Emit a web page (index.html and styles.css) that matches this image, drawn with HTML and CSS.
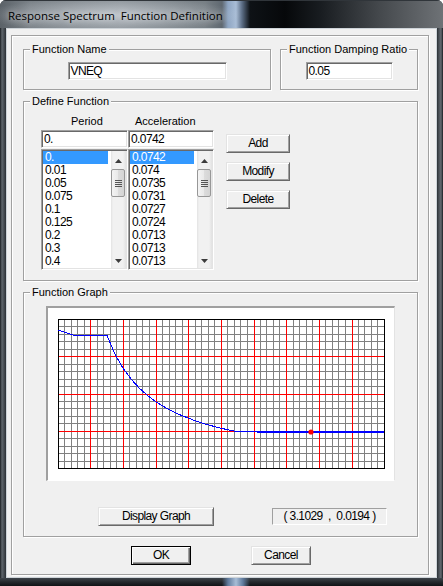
FILE: index.html
```
<!DOCTYPE html>
<html>
<head>
<meta charset="utf-8">
<link rel="stylesheet" href="styles.css">
</head>
<body>
<div class="window">
  <div class="titlebar"><span class="title">Response Spectrum  Function Definition</span></div>
  <div class="client">
    <div class="frame">
      <div class="row1">
        <fieldset class="grp grp-name">
          <legend>Function Name</legend>
          <div class="grp-body"><div class="edit edit-name">VNEQ</div></div>
        </fieldset>
        <fieldset class="grp grp-damp">
          <legend>Function Damping Ratio</legend>
          <div class="grp-body"><div class="edit edit-damp">0.05</div></div>
        </fieldset>
      </div>

      <fieldset class="grp grp-define">
        <legend>Define Function</legend>
        <div class="define-body">
          <div class="col col-period">
            <div class="colhead">Period</div>
            <div class="edit edit-col">0.</div>
            <div class="list">
              <div class="items">
                <div class="item sel">0.</div>
                <div class="item">0.01</div>
                <div class="item">0.05</div>
                <div class="item">0.075</div>
                <div class="item">0.1</div>
                <div class="item">0.125</div>
                <div class="item">0.2</div>
                <div class="item">0.3</div>
                <div class="item">0.4</div>
              </div>
              <div class="sbar">
                <div class="arrow arrow-up"><svg width="7" height="4" viewBox="0 0 7 4"><path d="M0 4H7L3.5 0Z"/></svg></div>
                <div class="thumb"><div class="grip"></div></div>
                <div class="track"></div>
                <div class="arrow arrow-down"><svg width="7" height="4" viewBox="0 0 7 4"><path d="M0 0H7L3.5 4Z"/></svg></div>
              </div>
            </div>
          </div>
          <div class="col col-accel">
            <div class="colhead">Acceleration</div>
            <div class="edit edit-col">0.0742</div>
            <div class="list">
              <div class="items">
                <div class="item sel">0.0742</div>
                <div class="item">0.074</div>
                <div class="item">0.0735</div>
                <div class="item">0.0731</div>
                <div class="item">0.0727</div>
                <div class="item">0.0724</div>
                <div class="item">0.0713</div>
                <div class="item">0.0713</div>
                <div class="item">0.0713</div>
              </div>
              <div class="sbar">
                <div class="arrow arrow-up"><svg width="7" height="4" viewBox="0 0 7 4"><path d="M0 4H7L3.5 0Z"/></svg></div>
                <div class="thumb"><div class="grip"></div></div>
                <div class="track"></div>
                <div class="arrow arrow-down"><svg width="7" height="4" viewBox="0 0 7 4"><path d="M0 0H7L3.5 4Z"/></svg></div>
              </div>
            </div>
          </div>
          <div class="btns">
            <div class="btn btn-side">Add</div>
            <div class="btn btn-side">Modify</div>
            <div class="btn btn-side">Delete</div>
          </div>
        </div>
      </fieldset>

      <fieldset class="grp grp-graph">
        <legend>Function Graph</legend>
        <div class="graph-body">
          <div class="canvas">
            <svg width="346" height="172" viewBox="49 308 346 172">
              <g shape-rendering="crispEdges" fill="none">
                <path stroke="#808080" stroke-width="1" d="M65.5 319V469M72.5 319V469M78.5 319V469M85.5 319V469M98.5 319V469M104.5 319V469M111.5 319V469M117.5 319V469M130.5 319V469M137.5 319V469M143.5 319V469M150.5 319V469M163.5 319V469M170.5 319V469M176.5 319V469M183.5 319V469M196.5 319V469M202.5 319V469M209.5 319V469M215.5 319V469M228.5 319V469M235.5 319V469M241.5 319V469M248.5 319V469M261.5 319V469M267.5 319V469M274.5 319V469M280.5 319V469M294.5 319V469M300.5 319V469M307.5 319V469M313.5 319V469M326.5 319V469M333.5 319V469M339.5 319V469M346.5 319V469M359.5 319V469M365.5 319V469M372.5 319V469M378.5 319V469M59 326.5H386M59 334.5H386M59 341.5H386M59 349.5H386M59 364.5H386M59 371.5H386M59 379.5H386M59 386.5H386M59 401.5H386M59 408.5H386M59 416.5H386M59 423.5H386M59 438.5H386M59 446.5H386M59 453.5H386M59 461.5H386"/>
                <path stroke="#ff0000" stroke-width="1" d="M91.5 319V469M124.5 319V469M157.5 319V469M189.5 319V469M222.5 319V469M255.5 319V469M287.5 319V469M320.5 319V469M353.5 319V469M59 356.5H386M59 394.5H386M59 431.5H386"/>
                <rect x="59.5" y="319.5" width="326" height="149" stroke="#000" stroke-width="1"/>
                <polyline stroke="#0000ff" stroke-width="1" points="59.5,330.5 61,330.8 63,331.4 65,332 67.2,332.7 69.2,333.4 75.3,335.3 107.9,335.3 116,354.3 124.2,368.5 132.4,379.5 140.5,388.4 148.7,395.6 156.8,401.7 165,406.8 173.1,411.1 181.3,414.9 189.4,418.2 197.6,421.2 205.7,423.8 213.9,426.1 222,428.2 230.2,430.1 238.3,431.5 258,431.8"/>
                <path stroke="#0000ff" stroke-width="2" d="M258 432H385"/>
              </g>
              <circle cx="312" cy="432" r="2.6" fill="#ff0000"/>
            </svg>
          </div>
          <div class="graph-row">
            <div class="btn btn-display">Display Graph</div>
            <div class="coords">( 3.1029  ,  0.0194 )</div>
          </div>
        </div>
      </fieldset>

      <div class="dlg-btns">
        <div class="btn btn-dlg btn-default">OK</div>
        <div class="btn btn-dlg">Cancel</div>
      </div>
    </div>
  </div>
  <div class="bottomframe"></div>
</div>
</body>
</html>
```
FILE: styles.css
```
html, body {
  margin: 0;
  padding: 0;
  background: #ffffff;
}

.window {
  width: 443px;
  height: 586px;
  border-radius: 6px 6px 0 0;
  overflow: hidden;
  background: linear-gradient(90deg, #181c20 0, #5f666c 2px, #464c52 4px, #2a2f34 6px, #2a2f34 437px, #4a5056 439px, #646a70 441px, #181c20 443px);
}

.titlebar {
  height: 28px;
  box-sizing: border-box;
  padding: 6px 0 0 8px;
  box-shadow: inset 0 1px 0 #30353a;
  background:
    radial-gradient(ellipse 130px 17px at 112px 15px, rgba(225, 230, 236, 0.6), rgba(225, 230, 236, 0) 100%),
    linear-gradient(90deg, #5b6268 0, #7b8288 30px, #8b9298 120px, #788086 205px, #5f6870 222px, #8fa6c3 228px, #a9bdd6 236px, #5c6e86 242px, #0e1216 250px, #06080a 285px, #181c20 320px, #45494d 380px, #6e7276 443px);
}

.title {
  font-family: "Open Sans", "Noto Sans", sans-serif;
  font-size: 11.5px;
  line-height: 16px;
  color: #000;
  white-space: pre;
  text-shadow: 0 0 6px rgba(255, 255, 255, 0.7);
}

.client {
  margin: 0 6px;
  height: 550px;
  box-sizing: border-box;
  border: 1px solid #cdd3d8;
  background: #f0f0f0;
  padding-top: 6px;
  padding-left: 4px;
}

.frame {
  width: 418px;
  height: 540px;
  box-sizing: border-box;
  border: 1px solid #a0a0a0;
  box-shadow: inset 1px 1px 0 #fff, 1px 1px 0 #fff;
  padding: 7px 10px 0 11px;
  font-family: "Liberation Sans", Arial, sans-serif;
  font-size: 11px;
  color: #000;
}

.row1 {
  display: flex;
  gap: 9px;
}

.grp {
  margin: 0;
  padding: 0;
  min-width: 0;
  border: 1px solid #a0a0a0;
  box-shadow: inset 1px 1px 0 #fff, 1px 1px 0 #fff;
}

.grp legend {
  margin-left: 6px;
  padding: 0 2px;
  font-size: 11px;
  line-height: 13px;
  background: #f0f0f0;
}

.grp-name {
  width: 248px;
  box-sizing: border-box;
}

.grp-damp {
  flex: 1;
}

.grp-body {
  display: flex;
  justify-content: center;
  padding: 6px 0 9px;
}

.ctl-text,
.edit,
.items,
.btn,
.coords {
  font-family: "Liberation Sans", Arial, sans-serif;
  font-size: 12px;
  letter-spacing: -0.6px;
}

.edit {
  box-sizing: border-box;
  height: 18px;
  background: #fff;
  border: 1px solid;
  border-color: #a0a0a0 #fff #fff #a0a0a0;
  box-shadow: inset 1px 1px 0 #696969, inset -1px -1px 0 #e3e3e3;
  padding: 0 2px;
  line-height: 16px;
  white-space: nowrap;
  overflow: hidden;
}

.edit-name {
  width: 159px;
}

.edit-damp {
  width: 87px;
}

.grp-define {
  margin-top: 5px;
}

.define-body {
  display: flex;
  align-items: flex-start;
  padding: 7px 0 10px 17px;
}

.col {
  display: flex;
  flex-direction: column;
}

.col-period {
  width: 87px;
}

.col-accel {
  width: 86px;
}

.colhead {
  height: 13px;
  line-height: 13px;
  font-size: 11px;
}

.col-period .colhead {
  padding-left: 30px;
}

.col-accel .colhead {
  padding-left: 7px;
}

.edit-col {
  margin-top: 2px;
}

.list {
  margin-top: 1px;
  height: 121px;
  box-sizing: border-box;
  display: flex;
  background: #fff;
  border: 1px solid;
  border-color: #a0a0a0 #fff #fff #a0a0a0;
  box-shadow: inset 1px 1px 0 #696969, inset -1px -1px 0 #e3e3e3;
  padding: 1px;
}

.items {
  flex: 1;
  padding-right: 3px;
  overflow: hidden;
}

.item {
  height: 13px;
  line-height: 13px;
  padding-left: 2px;
  white-space: nowrap;
}

.item.sel {
  background: #3399ff;
  color: #fff;
}

.sbar {
  width: 15px;
  display: flex;
  flex-direction: column;
  background: linear-gradient(90deg, #e2e2e2 0, #f1f1f1 2px, #f1f1f1 12px, #e2e2e2 15px);
}

.arrow {
  display: flex;
  justify-content: center;
  flex: none;
}

.arrow svg {
  fill: #3c3c3c;
}

.arrow-up {
  height: 18px;
  align-items: center;
  padding-top: 1px;
  box-sizing: border-box;
}

.arrow-down {
  height: 17px;
  align-items: flex-end;
  padding-bottom: 5px;
  box-sizing: border-box;
}

.thumb {
  flex: none;
  height: 28px;
  width: 14px;
  box-sizing: border-box;
  border: 1px solid #979797;
  border-radius: 2px;
  background: linear-gradient(90deg, #f4f4f4 0, #e9e9e9 50%, #dcdcdc 51%, #d4d4d4 100%);
  display: flex;
  align-items: center;
  justify-content: center;
}

.grip {
  width: 7px;
  height: 7px;
  background: repeating-linear-gradient(180deg, #555 0, #555 1px, transparent 1px, transparent 2px);
}

.track {
  flex: 1;
}

.btns {
  margin-left: 12px;
  margin-top: 19px;
  display: flex;
  flex-direction: column;
  gap: 9px;
}

.btn {
  box-sizing: border-box;
  height: 19px;
  background: #f0f0f0;
  border: 1px solid;
  border-color: #e3e3e3 #696969 #696969 #e3e3e3;
  box-shadow: inset 1px 1px 0 #fff, inset -1px -1px 0 #a0a0a0;
  text-align: center;
  line-height: 17px;
  white-space: nowrap;
}

.btn-side {
  width: 64px;
}

.grp-graph {
  margin-top: 5px;
}

.graph-body {
  padding: 7px 0 10px 22px;
}

.canvas {
  width: 349px;
  height: 175px;
  box-sizing: border-box;
  background: #fff;
  border-style: solid;
  border-width: 2px 1px 1px 2px;
  border-color: #a0a0a0 #e3e3e3 #fff #a0a0a0;
}

.canvas svg {
  display: block;
}

.graph-row {
  margin-top: 26px;
  display: flex;
  align-items: center;
  padding-left: 52px;
  gap: 58px;
}

.btn-display {
  width: 116px;
}

.coords {
  width: 115px;
  height: 17px;
  box-sizing: border-box;
  border: 1px solid;
  border-color: #a0a0a0 #fff #fff #a0a0a0;
  text-align: center;
  line-height: 15px;
  white-space: pre;
}

.dlg-btns {
  margin-top: 9px;
  display: flex;
  gap: 60px;
  padding-left: 108px;
}

.btn-dlg {
  width: 60px;
}

.btn-default {
  border-color: #000;
  box-shadow: inset 1px 1px 0 #fff, inset -1px -1px 0 #696969, inset -2px -2px 0 #a0a0a0;
}

.bottomframe {
  height: 8px;
  background:
    linear-gradient(90deg, rgba(0,0,0,0) 0, rgba(0,0,0,0) 222px, #5f7a9c 228px, #a8bdd6 236px, #5f7a9c 243px, rgba(0,0,0,0) 250px),
    linear-gradient(180deg, #3e444a 0, #24282c 4px, #101316 8px);
}
```
